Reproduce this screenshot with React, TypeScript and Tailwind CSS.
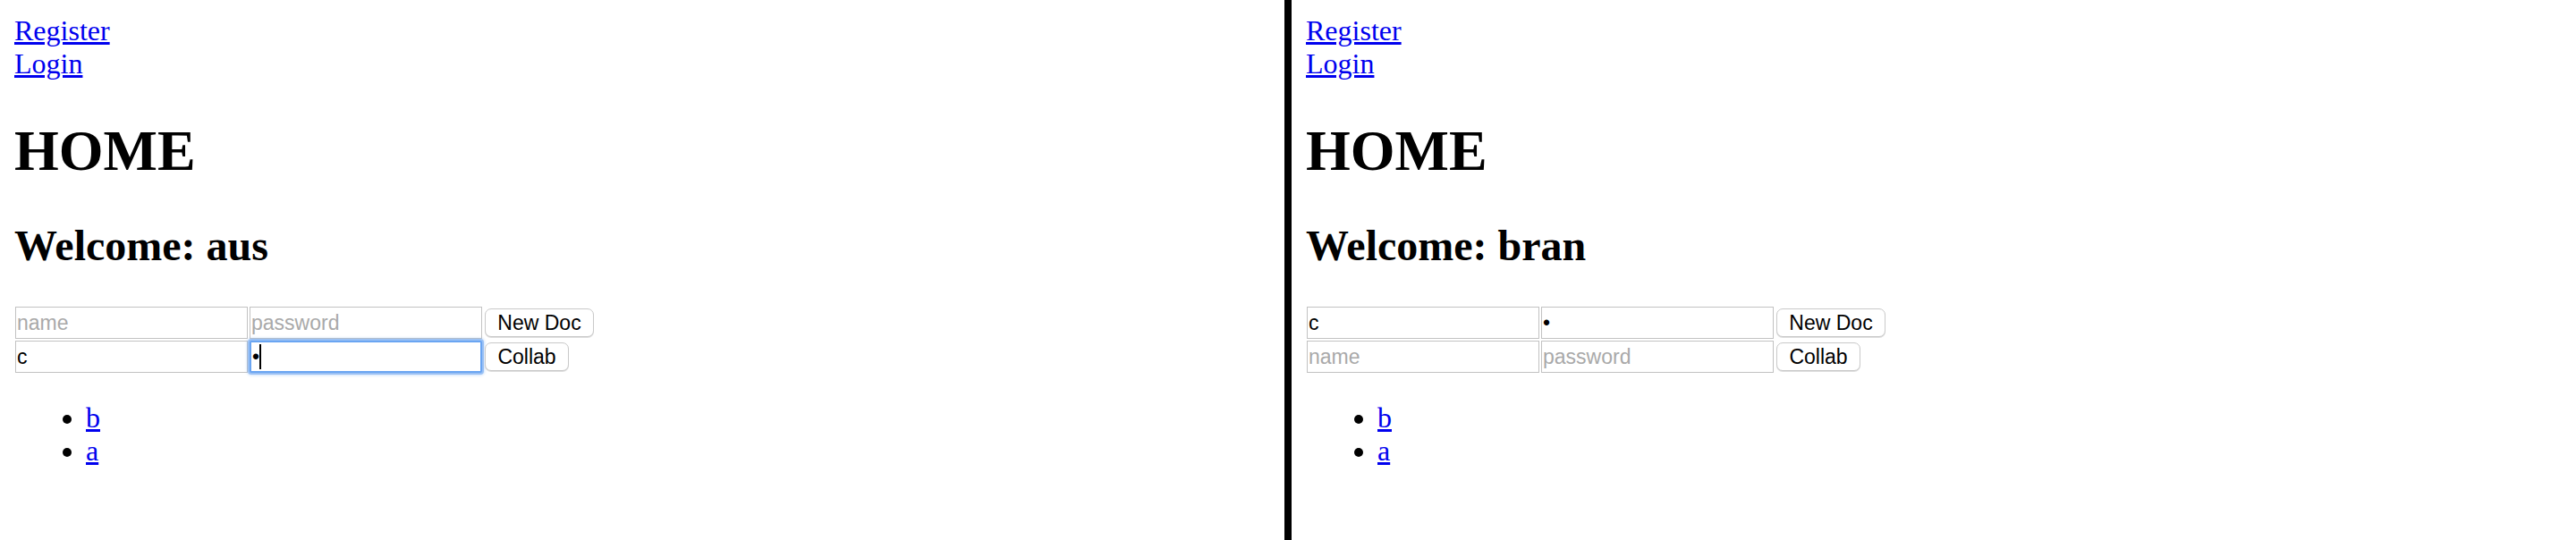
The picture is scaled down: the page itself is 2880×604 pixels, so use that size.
import React from "react";

type FieldProps = {
  value?: string;
  placeholder?: string;
  focused?: boolean;
  caret?: boolean;
  className?: string;
};

function Field({ value, placeholder, focused, caret, className = "" }: FieldProps) {
  const base =
    "box-border w-[260px] h-[36px] flex items-center pl-[1px] bg-white font-['Liberation_Sans',Arial,sans-serif] text-[23px] leading-none whitespace-pre";
  const border = focused
    ? "border-[2px] border-[#6aa5f2] rounded-[2px] shadow-[0_0_0_2px_rgba(115,168,240,0.6),0_0_3px_3px_rgba(140,185,245,0.4)]"
    : "border border-[#c2c2c2]";
  return (
    <div className={`${base} ${border} ${className}`}>
      {value ? (
        <span className="text-black">{value}</span>
      ) : (
        !caret && <span className="text-[#a9a9a9]">{placeholder}</span>
      )}
      {caret && <span className="inline-block w-[2px] h-[28px] bg-black" />}
    </div>
  );
}

function Btn({ label, width }: { label: string; width: string }) {
  return (
    <div
      className={`box-border ${width} h-[32px] ml-[3px] flex items-center justify-center rounded-[7px] border border-[#c9c9c9] bg-white shadow-[0_1px_0_rgba(0,0,0,0.13)] font-['Liberation_Sans',Arial,sans-serif] text-[23px] leading-none text-black`}
    >
      {label}
    </div>
  );
}

type Row = { name?: string; pass?: string; focused?: boolean };

function Pane({ user, rows }: { user: string; rows: [Row, Row] }) {
  return (
    <div className="box-border h-full flex-1 p-[16px] font-['Liberation_Serif','Times_New_Roman',serif] text-[32px] leading-[36.8px] text-black">
      <div>
        <a className="text-[#0000ee] underline">Register</a>
        <br />
        <a className="text-[#0000ee] underline">Login</a>
      </div>
      <h1 className="mt-[42px] mb-[42px] text-[64px] leading-[73.5px] font-bold">HOME</h1>
      <h2 className="mt-[40px] mb-[41px] text-[48px] leading-[55.2px] font-bold">Welcome: {user}</h2>
      <div className="flex flex-col gap-[2px] pl-[1px]">
        <div className="flex items-center">
          <Field value={rows[0].name} placeholder="name" />
          <Field
            value={rows[0].pass}
            placeholder="password"
            focused={rows[0].focused}
            caret={rows[0].focused}
            className="ml-[2px]"
          />
          <Btn label="New Doc" width="w-[122px]" />
        </div>
        <div className="flex items-center">
          <Field value={rows[1].name} placeholder="name" />
          <Field
            value={rows[1].pass}
            placeholder="password"
            focused={rows[1].focused}
            caret={rows[1].focused}
            className="ml-[2px]"
          />
          <Btn label="Collab" width="w-[94px]" />
        </div>
      </div>
      <ul className="mt-[32px] mb-[32px] pl-[80px] list-disc">
        <li>
          <a className="text-[#0000ee] underline">b</a>
        </li>
        <li>
          <a className="text-[#0000ee] underline">a</a>
        </li>
      </ul>
    </div>
  );
}

export default function App() {
  return (
    <div className="flex w-[2880px] h-[604px] overflow-hidden bg-white">
      <div className="w-[1436px] h-full shrink-0 flex">
        <Pane user="aus" rows={[{}, { name: "c", pass: "\u2022", focused: true }]} />
      </div>
      <div className="w-[8px] h-full shrink-0 bg-black" />
      <div className="flex-1 h-full flex">
        <Pane user="bran" rows={[{ name: "c", pass: "\u2022" }, {}]} />
      </div>
    </div>
  );
}
